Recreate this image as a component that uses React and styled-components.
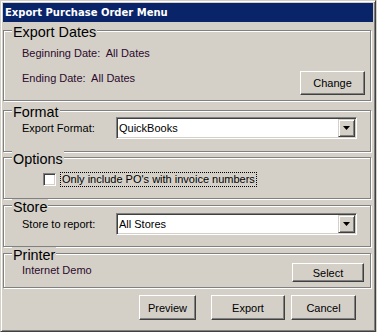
import React from "react";
import styled, { createGlobalStyle } from "styled-components";

const GlobalStyle = createGlobalStyle`
  html, body {
    margin: 0;
    padding: 0;
    background: #d4d0c8;
  }
  body {
    font-family: "Liberation Sans", Arial, sans-serif;
    font-size: 11px;
    color: #000;
  }
`;

const Select = ({ value }) => (
  <SelectBox>
    <SelectValue>{value}</SelectValue>
    <DropButton>
      <svg width="7" height="4" viewBox="0 0 7 4">
        <polygon points="0,0 7,0 3.5,4" fill="#000" />
      </svg>
    </DropButton>
  </SelectBox>
);

const App = () => {
  return (
    <>
      <GlobalStyle />
      <Window>
        <TitleBar>Export Purchase Order Menu</TitleBar>
        <Body>
          <Group $height={71} $top={8}>
            <Legend>Export Dates</Legend>
            <DateLine>Beginning Date:&nbsp; All Dates</DateLine>
            <DateRow>
              <DateText>Ending Date:&nbsp; All Dates</DateText>
              <Button $w={65} $h={24}>Change</Button>
            </DateRow>
          </Group>

          <Group $height={42} $top={9}>
            <Legend>Format</Legend>
            <FieldRow $top={6}>
              <FieldLabel>Export Format:</FieldLabel>
              <Select value="QuickBooks" />
            </FieldRow>
          </Group>

          <Group $height={42} $top={5}>
            <Legend>Options</Legend>
            <CheckRow>
              <CheckBox />
              <CheckLabel>Only include PO's with invoice numbers</CheckLabel>
            </CheckRow>
          </Group>

          <Group $height={42} $top={6}>
            <Legend>Store</Legend>
            <FieldRow $top={7}>
              <FieldLabel>Store to report:</FieldLabel>
              <Select value="All Stores" />
            </FieldRow>
          </Group>

          <Group $height={35} $top={6}>
            <Legend>Printer</Legend>
            <PrinterRow>
              <DateText>Internet Demo</DateText>
              <Button $w={72} $h={19}>Select</Button>
            </PrinterRow>
          </Group>

          <Actions>
            <Button $w={57} $h={25}>Preview</Button>
            <Button $w={74} $h={25} $left={15}>Export</Button>
            <Button $w={65} $h={25} $left={6}>Cancel</Button>
          </Actions>
        </Body>
      </Window>
    </>
  );
};

const Window = styled.div`
  box-sizing: border-box;
  width: 376px;
  height: 332px;
  padding: 2px;
  border: 1px solid;
  border-color: #d4d0c8 #404040 #404040 #d4d0c8;
  box-shadow: inset 1px 1px 0 #fff, inset -1px -1px 0 #808080;
  display: flex;
  flex-direction: column;
`;

const TitleBar = styled.div`
  height: 19px;
  line-height: 19px;
  padding-left: 2px;
  background: #0a246a;
  color: #fff;
  font-family: "DejaVu Sans", Verdana, sans-serif;
  font-weight: bold;
  font-size: 10px;
  white-space: nowrap;
`;

const Body = styled.div`
  display: flex;
  flex-direction: column;
  padding-right: 2px;
`;

const Group = styled.div`
  box-sizing: border-box;
  height: ${(p) => p.$height}px;
  margin-top: ${(p) => p.$top}px;
  border: 1px solid #808080;
  box-shadow: inset 1px 1px 0 #fff, 1px 1px 0 #fff;
  display: flex;
  flex-direction: column;
`;

const Legend = styled.div`
  align-self: flex-start;
  height: 16px;
  line-height: 16px;
  margin: -7px 0 -9px 8px;
  padding: 0 1px;
  background: #d4d0c8;
  font-size: 14.4px;
  white-space: nowrap;
`;

const DateText = styled.div`
  line-height: 14px;
  color: #2c0a2c;
  white-space: nowrap;
`;

const DateLine = styled(DateText)`
  margin: 15px 0 0 18px;
`;

const DateRow = styled.div`
  display: flex;
  justify-content: space-between;
  align-items: flex-start;
  margin-top: 11px;
  padding: 0 5px 0 18px;
`;

const FieldRow = styled.div`
  display: flex;
  align-items: center;
  margin-top: ${(p) => p.$top}px;
  padding-left: 18px;
`;

const FieldLabel = styled.div`
  width: 94px;
  white-space: nowrap;
`;

const SelectBox = styled.div`
  box-sizing: border-box;
  width: 241px;
  height: 22px;
  padding: 1px;
  background: #fff;
  border: 1px solid;
  border-color: #808080 #fff #fff #808080;
  box-shadow: inset 1px 1px 0 #404040, inset -1px -1px 0 #d4d0c8;
  display: flex;
`;

const SelectValue = styled.div`
  flex: 1;
  padding-left: 1px;
  line-height: 18px;
`;

const DropButton = styled.div`
  box-sizing: border-box;
  width: 17px;
  background: #d4d0c8;
  border: 1px solid;
  border-color: #d4d0c8 #404040 #404040 #d4d0c8;
  box-shadow: inset 1px 1px 0 #fff, inset -1px -1px 0 #808080;
  display: flex;
  align-items: center;
  justify-content: center;
`;

const CheckRow = styled.div`
  display: flex;
  align-items: center;
  margin-top: 14px;
  padding-left: 39px;
`;

const CheckBox = styled.div`
  box-sizing: border-box;
  width: 13px;
  height: 13px;
  background: #fff;
  border: 1px solid;
  border-color: #808080 #fff #fff #808080;
  box-shadow: inset 1px 1px 0 #404040, inset -1px -1px 0 #d4d0c8;
`;

const CheckLabel = styled.div`
  margin-left: 4px;
  padding: 0 1px;
  line-height: 13px;
  border: 1px dotted #000;
  white-space: nowrap;
`;

const PrinterRow = styled.div`
  display: flex;
  justify-content: space-between;
  align-items: flex-start;
  margin-top: 9px;
  padding: 0 6px 0 18px;
`;

const Button = styled.div`
  box-sizing: border-box;
  width: ${(p) => p.$w}px;
  height: ${(p) => p.$h}px;
  margin-left: ${(p) => p.$left || 0}px;
  border: 1px solid;
  border-color: #fff #404040 #404040 #fff;
  box-shadow: inset -1px -1px 0 #808080;
  background: #d4d0c8;
  display: flex;
  align-items: center;
  justify-content: center;
  font-size: 11px;
`;

const Actions = styled.div`
  display: flex;
  justify-content: flex-end;
  margin-top: 7px;
  padding-right: 15px;
`;

export default App;
